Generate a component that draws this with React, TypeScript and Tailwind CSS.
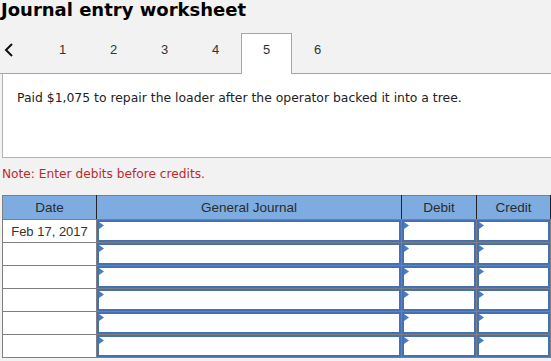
import React from "react";

const tabs = ["1", "2", "3", "4", "5", "6"];
const active = "5";

function Arrow() {
  return (
    <svg
      width="5"
      height="7"
      viewBox="0 0 5 7"
      className="absolute left-0 top-0"
    >
      <path d="M0 0 L5 3.5 L0 7 Z" fill="#4a7cc4" />
    </svg>
  );
}

function InputCell() {
  return (
    <td className="border border-[#7f7f7f] p-0 h-[23px] bg-white">
      <div className="relative h-[22px] border-2 border-[#4571b4] bg-white">
        <Arrow />
      </div>
    </td>
  );
}

export default function App() {
  const rows = ["Feb 17, 2017", "", "", "", "", ""];

  return (
    <div className="w-[551px] h-[361px] bg-[#f2f2f2] overflow-hidden">
      <h1 className="pl-[1px] text-[18px] leading-[20px] font-bold text-black font-['DejaVu_Sans',Verdana,sans-serif]">
        Journal entry worksheet
      </h1>

      <div className="mt-[13px] flex h-[41px] border-b border-[#a6a6a6] font-['Liberation_Sans',Arial,sans-serif] text-[13px] text-[#333]">
        <div className="w-[37px] flex items-center pl-[4px] pb-[6px]">
          <svg width="10" height="14" viewBox="0 0 10 14">
            <path
              d="M8 1 L2 7 L8 13"
              fill="none"
              stroke="#111"
              strokeWidth="2"
            />
          </svg>
        </div>
        {tabs.map((t) => (
          <div
            key={t}
            className={
              t === active
                ? "w-[51px] h-[41px] flex items-center justify-center pb-[8px] bg-white border border-b-0 border-[#a6a6a6]"
                : "w-[51px] flex items-center justify-center pb-[6px]"
            }
          >
            {t}
          </div>
        ))}
      </div>

      <div className="ml-[2px] w-[560px] h-[84px] bg-white border border-t-0 border-[#b3b3b3] pl-[14px] pt-[15px] text-[12.4px] text-[#222] font-['DejaVu_Sans',Verdana,sans-serif]">
        Paid $1,075 to repair the loader after the operator backed it into a tree.
      </div>

      <p className="mt-[7px] pl-[2px] text-[12.2px] text-[#c2272d] font-['DejaVu_Sans',Verdana,sans-serif]">
        Note: Enter debits before credits.
      </p>

      <table className="mt-[12px] ml-[2px] w-[548px] border-collapse table-fixed font-['Liberation_Sans',Arial,sans-serif] text-[13px] text-[#333]">
        <colgroup>
          <col className="w-[94px]" />
          <col className="w-[305px]" />
          <col className="w-[75px]" />
          <col className="w-[74px]" />
        </colgroup>
        <thead>
          <tr className="bg-[#7eabe0] h-[24px] text-[13.5px] text-[#2b2b2b]">
            <th className="border border-[#7f7f7f] border-r-[#222] font-normal">Date</th>
            <th className="border border-[#7f7f7f] border-r-[#222] font-normal">General Journal</th>
            <th className="border border-[#7f7f7f] border-r-[#222] font-normal">Debit</th>
            <th className="border border-[#7f7f7f] border-r-[#222] font-normal">Credit</th>
          </tr>
        </thead>
        <tbody>
          {rows.map((d, i) => (
            <tr key={i}>
              <td className="border border-[#7f7f7f] bg-white h-[23px] p-0 text-center">
                {d}
              </td>
              <InputCell />
              <InputCell />
              <InputCell />
            </tr>
          ))}
        </tbody>
      </table>
    </div>
  );
}
